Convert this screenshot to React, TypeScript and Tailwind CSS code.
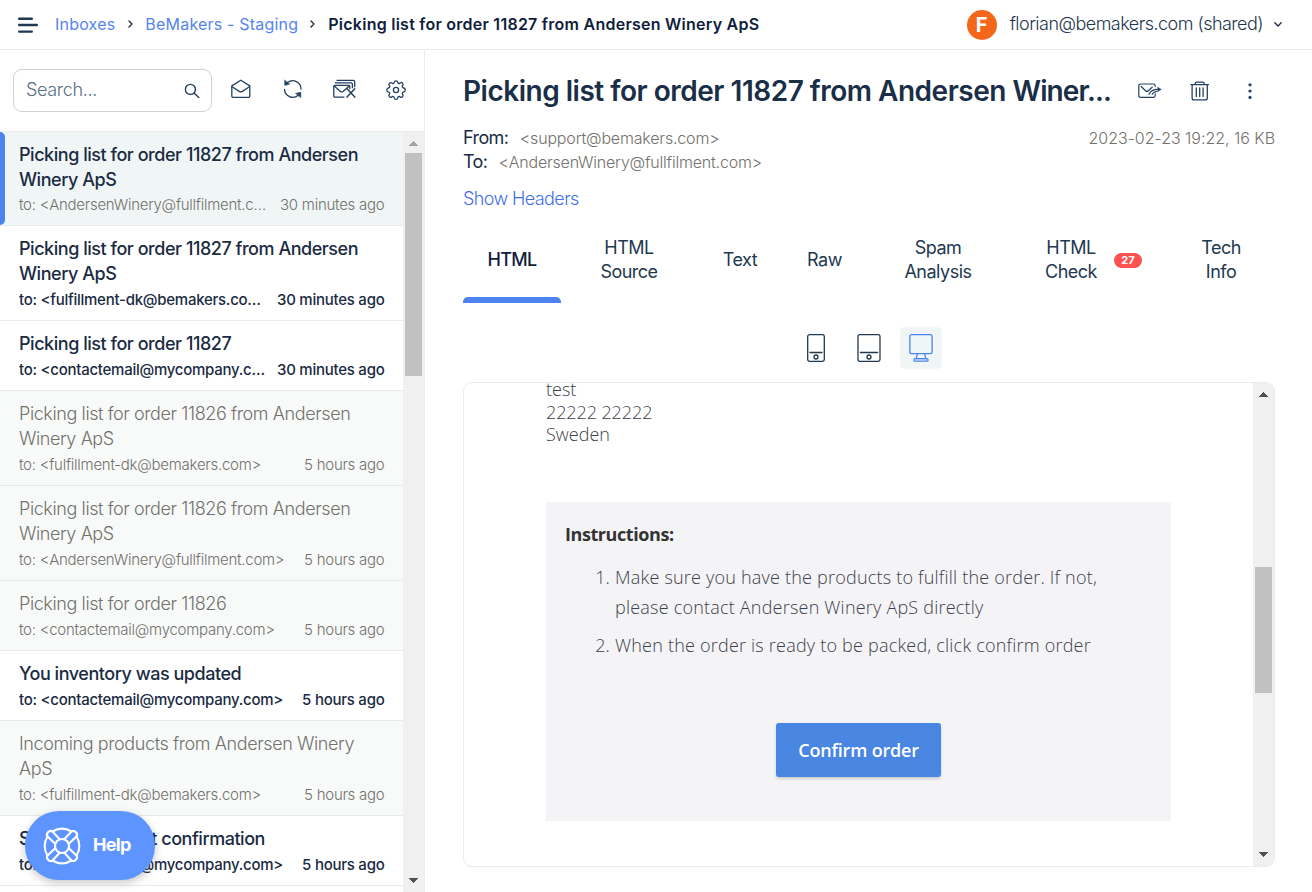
import React from "react";

type Mail = {
  title: string;
  to: string;
  time: string;
  state: "selected" | "unread" | "read";
};

const mails: Mail[] = [
  { title: "Picking list for order 11827 from Andersen Winery ApS", to: "<AndersenWinery@fullfilment.com>", time: "30 minutes ago", state: "selected" },
  { title: "Picking list for order 11827 from Andersen Winery ApS", to: "<fulfillment-dk@bemakers.com>", time: "30 minutes ago", state: "unread" },
  { title: "Picking list for order 11827", to: "<contactemail@mycompany.com>", time: "30 minutes ago", state: "unread" },
  { title: "Picking list for order 11826 from Andersen Winery ApS", to: "<fulfillment-dk@bemakers.com>", time: "5 hours ago", state: "read" },
  { title: "Picking list for order 11826 from Andersen Winery ApS", to: "<AndersenWinery@fullfilment.com>", time: "5 hours ago", state: "read" },
  { title: "Picking list for order 11826", to: "<contactemail@mycompany.com>", time: "5 hours ago", state: "read" },
  { title: "You inventory was updated", to: "<contactemail@mycompany.com>", time: "5 hours ago", state: "unread" },
  { title: "Incoming products from Andersen Winery ApS", to: "<fulfillment-dk@bemakers.com>", time: "5 hours ago", state: "read" },
  { title: "Stock movement confirmation", to: "<contactemail@mycompany.com>", time: "5 hours ago", state: "unread" },
];

const line = {
  fill: "none",
  stroke: "currentColor",
  strokeLinecap: "round" as const,
  strokeLinejoin: "round" as const,
};

const MenuIcon = () => (
  <svg className="h-4 w-5 text-[#1d3850]" viewBox="0 0 20 16" {...line} strokeWidth="2.4">
    <path d="M1.2 1.7h12.6M1.2 8h17.6M1.2 14.6h12.6" />
  </svg>
);

const SearchIcon = () => (
  <svg className="size-4" viewBox="0 0 16 16" {...line} strokeWidth="1.4">
    <circle cx="6.4" cy="6.4" r="5" />
    <path d="M10.2 10.2l4.6 4.4" />
  </svg>
);

const OpenMailIcon = () => (
  <svg className="size-5" viewBox="0 0 20 20" {...line} strokeWidth="1.3">
    <path d="M.8 6.900 9.800 1.200l9 5.700v10.200a1.200 1.200 0 0 1-1.200 1.200H2a1.200 1.200 0 0 1-1.200-1.200z" />
    <path d="m1.100 7.800 7.100 4.600a3 3 0 0 0 3.200 0l7-4.600" />
  </svg>
);

const RefreshIcon = () => (
  <svg className="size-5" viewBox="0 0 20 20" {...line} strokeWidth="1.300">
    <path d="M4.600 3.600A8.200 8.200 0 0 1 18 10.100M1.500 10.300A8.200 8.200 0 0 0 15.200 16.200" />
    <path d="M1.600 1.300 1.700 6.400 6.500 5.200zM17.700 18.600 18 13.300 12.800 14.300z" fill="currentColor" strokeWidth=".5" />
  </svg>
);

const MailsDeleteIcon = () => (
  <svg className="h-5 w-[23px]" viewBox="0 0 23 20" {...line} strokeWidth="1.300">
    <path d="M4 1.400h16.400a1.300 1.300 0 0 1 1.300 1.300v5" />
    <path d="M2.400 3.900h15.700a1.300 1.300 0 0 1 1.300 1.300v3.600" />
    <path d="M11 18.100H2a1.200 1.200 0 0 1-1.200-1.200V7.600A1.200 1.200 0 0 1 2 6.400h13.600a1.200 1.200 0 0 1 1.200 1.200v2" />
    <path d="m1.300 7 5.800 5.200a2.400 2.400 0 0 0 3.200 0L16.200 7" />
    <path d="m14 9.800 7.800 8.300M21.800 9.800 14 18.100" strokeWidth="1.500" />
  </svg>
);

const GearIcon = () => (
  <svg className="size-5" viewBox="0 0 20 20" {...line} strokeWidth="1.300">
    <path d="M8.300 1.900Q8.500.8 10 .8t1.700 1.100l.2.9q.3.600.9.700.6.100 1-.3l.7-.5q1-.6 2 .4t.4 2l-.5.800q-.3.500-.1 1 .2.700.8.900l.9.200q1.200.3 1.200 2t-1.200 1.900l-.9.200q-.6.200-.8.800-.2.500.1 1l.5.800q.6 1-.4 2t-2 .4l-.8-.5q-.4-.3-1-.1-.6.100-.8.800l-.2.900q-.3 1.100-1.700 1.100t-1.700-1.100l-.2-.9q-.2-.6-.8-.8-.6-.2-1 .1l-.8.500q-1 .6-2-.4t-.4-2l.5-.8q.3-.5.1-1-.2-.6-.8-.8L2 11.900Q.8 11.600.8 10T2 8l.9-.2q.6-.2.8-.8.2-.5-.1-1l-.5-.8q-.6-1 .4-2t2-.4l.8.500q.4.400 1 .2.600-.1.8-.8z" />
    <circle cx="10" cy="10" r="2.600" />
  </svg>
);

const ForwardMailIcon = () => (
  <svg className="h-4 w-6" viewBox="0 0 24 16" {...line} strokeWidth="1.200">
    <path d="M17.200 3.400V2.800A1.800 1.800 0 0 0 15.400 1H2.500A1.700 1.700 0 0 0 .8 2.700v10a1.700 1.700 0 0 0 1.700 1.700h12.900a1.800 1.800 0 0 0 1.800-1.800v-1.700" />
    <path d="m3.200 3.500 4.300 4.200a2 2 0 0 0 2.800 0l3.900-3.500" />
    <path d="M11 11.100c1.600-3 3.900-4.600 8.400-4.700M14.200 11.200c1-1.600 2.400-2.500 4.600-2.800" />
    <path d="m19.900 4.200 3.400 2.200-3.400 2.200z" fill="currentColor" strokeWidth=".4" />
  </svg>
);

const TrashIcon = () => (
  <svg className="size-5" viewBox="0 0 20 20" {...line} strokeWidth="1.300">
    <path d="M.9 3.600h17.600M5.200 3.400V2.500A1.400 1.400 0 0 1 6.600 1.100h6.200a1.400 1.400 0 0 1 1.400 1.400v.9" />
    <path d="M2.100 3.800v13.200a1.900 1.900 0 0 0 1.900 1.900h11.400a1.900 1.900 0 0 0 1.900-1.900V3.800M6.300 7v8.500M9.700 7v8.500M13.100 7v8.500" />
  </svg>
);

const PhoneIcon = () => (
  <svg className="h-7 w-[18px]" viewBox="0 0 18 28" {...line} strokeWidth="1.300">
    <rect x=".7" y=".7" width="16.600" height="26.600" rx="1.800" />
    <path d="M3 18.500h12" />
    <circle cx="9" cy="23" r="2" />
  </svg>
);

const TabletIcon = () => (
  <svg className="h-7 w-6" viewBox="0 0 24 28" {...line} strokeWidth="1.300">
    <rect x="1" y=".7" width="22" height="26.600" rx="1.800" />
    <path d="M3.400 18.500h17.200" />
    <circle cx="12" cy="23" r="2" />
  </svg>
);

const DesktopIcon = () => (
  <svg className="h-7 w-6" viewBox="0 0 24 28" {...line} strokeWidth="1.300">
    <rect x=".9" y=".7" width="22.200" height="19" rx="1.800" />
    <path d="M8.300 19.800c-.2 2.200-.6 3.800-1.500 4.900h10.400c-.9-1.100-1.300-2.700-1.500-4.900" />
    <rect x="4.900" y="24.700" width="14.200" height="2.500" rx="1.200" />
  </svg>
);

const LifebuoyIcon = () => (
  <svg className="size-[38px]" viewBox="0 0 38 38" {...line} strokeWidth="2.100">
    <circle cx="19" cy="19" r="7" />
    <path d="M9.500 4.500a17.300 17.300 0 0 1 19 0M33.500 9.500a17.300 17.300 0 0 1 0 19M28.500 33.500a17.300 17.300 0 0 1-19 0M4.500 28.500a17.300 17.300 0 0 1 0-19" />
    <path d="m9.500 4.500 7.200 7.700M4.500 9.500l7.700 7.200M28.500 4.500l-7.200 7.700M33.500 9.500l-7.700 7.200M28.500 33.500l-7.200-7.700M33.500 28.500l-7.700-7.200M9.500 33.500l7.200-7.700M4.500 28.500l7.700-7.200" />
    <path d="M9.500 4.500c-2.700-2-7.200 2-5 5M28.500 4.500c2.700-2 7.200 2 5 5M33.500 28.500c2 2.700-2 7.200-5 5M4.500 28.500c-2 2.700 2 7.200 5 5" />
  </svg>
);

const Chevron = ({ className }: { className: string }) => (
  <svg className={className} viewBox="0 0 5 8" {...line} strokeWidth="1.400">
    <path d="m1 1 3 3-3 3" />
  </svg>
);

const Arrow = ({ className }: { className: string }) => (
  <svg className={className} viewBox="0 0 9 5" shapeRendering="crispEdges">
    <path d="M4.500 0 9 5H0z" fill="currentColor" />
  </svg>
);

function MailRow({ mail }: { mail: Mail }) {
  const { state } = mail;
  const row = state === "selected" ? "bg-[#f0f6f6]" : state === "read" ? "bg-[#f8faf9]" : "bg-white";
  const title =
    state === "read"
      ? "font-light tracking-[-0.4px] text-[#72716c]"
      : "font-medium tracking-[-0.46px] text-[#1a2b42]";
  const sub =
    state === "unread"
      ? "font-medium tracking-[-0.26px] text-[#1a2b42]"
      : "font-light tracking-[-0.26px] text-[#72716c]";
  return (
    <div className={`relative border-b border-[#e9ebeb] pt-2.5 pr-[18.5px] pb-[7px] pl-[19px] ${row}`}>
      {state === "selected" && <span className="absolute inset-y-0 left-0 w-[5px] rounded-r-[5px] bg-[#4c83ee]" />}
      <div className={`w-[350px] text-[18px] leading-[25px] ${title}`}>{mail.title}</div>
      <div className={`flex justify-between text-[15px] ${state === "selected" ? "leading-[26px]" : "leading-[27px]"} ${sub}`}>
        <span className="max-w-[250px] truncate data-[wide=true]:max-w-[270px]" data-wide={mail.time === "5 hours ago"}>
          to: {mail.to}
        </span>
        <span className="shrink-0 tracking-[-0.25px]">{mail.time}</span>
      </div>
    </div>
  );
}

export default function App() {
  return (
    <div className="relative flex h-[892px] w-[1312px] flex-col overflow-hidden bg-white font-['Inter',sans-serif] text-[#1a2b42]">
      <header className="flex h-[50px] shrink-0 items-center border-b border-[#ebebeb] pr-[30px] pl-[18px]">
        <MenuIcon />
        <nav className="mb-0.5 ml-[17px] flex items-center text-[16px] leading-6">
          <span className="tracking-[0.2px] text-[#5684ee]">Inboxes</span>
          <Chevron className="mx-[12.5px] h-2 w-[5px]" />
          <span className="tracking-[0.2px] text-[#5684ee]">BeMakers - Staging</span>
          <Chevron className="mr-[13px] ml-[12px] h-2 w-[5px]" />
          <span className="font-semibold tracking-[0.25px] text-[#101d3c]">
            Picking list for order 11827 from Andersen Winery ApS
          </span>
        </nav>
        <div className="ml-auto flex items-center">
          <span className="flex size-[30px] items-center justify-center rounded-full bg-[#f4671b] text-[20px] font-bold text-white">
            F
          </span>
          <span className="mb-0.5 ml-[13px] text-[18px] leading-6 font-light tracking-[-0.52px] text-[#1f3650]">
            florian@bemakers.com (shared)
          </span>
          <svg className="ml-[11px] h-[5px] w-2" viewBox="0 0 8 5" {...line} strokeWidth="1.300">
            <path d="m.8.8 3.200 3.200L7.200.8" />
          </svg>
        </div>
      </header>

      <div className="flex min-h-0 flex-1">
        <aside className="flex w-[425px] shrink-0 flex-col border-r border-[#ebebeb]">
          <div className="flex h-[81px] shrink-0 items-center pl-[13px] text-[#234060]">
            <div className="flex h-[43px] w-[199px] items-center justify-between rounded-[9px] border border-[#cfd2d8] pr-[11px] pl-3">
              <span className="mb-0.5 text-[18px] font-light tracking-[-0.34px] text-[#567082]">Search...</span>
              <SearchIcon />
            </div>
            <div className="mb-[3px] ml-[19px] flex items-center gap-[30px]">
              <OpenMailIcon />
              <span className="ml-0.5">
                <RefreshIcon />
              </span>
              <MailsDeleteIcon />
              <span className="mt-px">
                <GearIcon />
              </span>
            </div>
          </div>
          <div className="flex min-h-0 flex-1 overflow-hidden border-t border-[#e9ebeb]">
            <div className="w-[403px] shrink-0">
              {mails.map((m, i) => (
                <MailRow key={i} mail={m} />
              ))}
            </div>
            <div className="flex flex-1 flex-col items-center bg-[#f0f0f0]">
              <Arrow className="mt-[9px] h-[5px] w-[9px] shrink-0 text-[#a3a3a3]" />
              <div className="mt-[7px] h-[223px] w-[17px] shrink-0 bg-[#c1c1c1]" />
              <Arrow className="mt-auto mb-[9px] h-[5px] w-[9px] shrink-0 rotate-180 text-[#505050]" />
            </div>
          </div>
        </aside>

        <main className="flex flex-1 flex-col pr-[37px] pl-[38px]">
          <div className="mt-[21px] flex h-10 items-center">
            <h1 className="w-[655px] text-[28px] leading-10 font-semibold tracking-[-0.49px] whitespace-nowrap text-[#1a2f47]">
              Picking list for order 11827 from Andersen <span className="tracking-[-0.9px]">Winer...</span>
            </h1>
            <div className="ml-5 flex items-center text-[#234060]">
              <ForwardMailIcon />
              <span className="mb-px ml-[28px]">
                <TrashIcon />
              </span>
              <svg className="ml-[38px] h-4 w-1" viewBox="0 0 4 16" fill="currentColor">
                <circle cx="2" cy="1.800" r="1.600" />
                <circle cx="2" cy="8" r="1.600" />
                <circle cx="2" cy="14.400" r="1.600" />
              </svg>
            </div>
          </div>

          <div className="mt-[15px] flex justify-between leading-6">
            <div>
              <div className="flex items-baseline">
                <span className="text-[18px] tracking-[-0.6px]">From:</span>
                <span className="ml-[11.5px] text-[16px] font-light tracking-[-0.18px] text-[#72716c]">&lt;support@bemakers.com&gt;</span>
              </div>
              <div className="flex items-baseline">
                <span className="text-[18px] tracking-[-0.6px]">To:</span>
                <span className="ml-[11px] text-[16px] font-light tracking-[-0.2px] text-[#72716c]">
                  &lt;AndersenWinery@fullfilment.com&gt;
                </span>
              </div>
            </div>
            <span className="text-[16px] font-light tracking-[-0.03px] text-[#72716c]">2023-02-23 19:22, 16 KB</span>
          </div>
          <a className="mt-[13px] text-[18px] leading-6 font-light tracking-[-0.6px] text-[#3f70e8]">Show Headers</a>

          <div className="mt-[13px] grid h-[79px] grid-cols-[98px_136px_86px_83px_144px_167px_88px] text-center text-[18px] leading-6 tracking-[-0.5px] text-[#22384f]">
            <div className="relative flex items-center justify-center pb-[7px] font-medium tracking-[-0.75px] text-[#101d3c]">
              HTML
              <span className="absolute inset-x-0 bottom-0 h-1.5 rounded-t-[5px] bg-[#4c83ee]" />
            </div>
            <div className="flex items-center justify-center pb-[7px]">
              HTML
              <br />
              Source
            </div>
            <div className="flex items-center justify-center pb-[7px]">Text</div>
            <div className="flex items-center justify-center pb-[7px]">Raw</div>
            <div className="flex items-center justify-center pb-[7px]">
              <span className="w-20">Spam Analysis</span>
            </div>
            <div className="flex items-center justify-center pr-[2px] pb-[7px]">
              <span className="w-14">HTML Check</span>
              <span className="mt-px ml-[15px] h-[15px] w-7 rounded-full bg-[#fb5151] text-[11px] leading-[15px] font-bold tracking-normal text-white">
                27
              </span>
            </div>
            <div className="flex items-center justify-center pb-[7px]">
              <span className="w-10">Tech Info</span>
            </div>
          </div>

          <div className="mt-6 flex h-[42px] items-center justify-center gap-[10.5px] pr-px text-[#22384f]">
            <span className="flex size-[42px] items-center justify-center">
              <PhoneIcon />
            </span>
            <span className="flex size-[42px] items-center justify-center">
              <TabletIcon />
            </span>
            <span className="flex size-[42px] items-center justify-center rounded-[5px] bg-[#f0f6f6] text-[#4c83ee]">
              <DesktopIcon />
            </span>
          </div>

          <section className="mt-[13px] flex h-[485px] overflow-hidden rounded-[9px] border border-[#ebebeb] font-['Open_Sans','Noto_Sans',sans-serif] text-[#3d404b]">
            <div className="flex-1 pl-[82px]">
              <div className="-mt-[5px] text-[18px] leading-[22.500px] font-light">
                <div>test</div>
                <div className="tracking-[-0.1px]">22222 22222</div>
                <div>Sweden</div>
              </div>
              <div className="mt-[56.500px] h-[319px] w-[625px] bg-[#f4f4f7] px-[19px] pt-[17px]">
                <div className="text-[18px] leading-[30px] font-bold tracking-[-0.42px] text-[#333333]">Instructions:</div>
                <ol className="mt-[13px] list-decimal space-y-2 pl-[50px] text-[18px] leading-[30px] font-light tracking-[0.21px]">
                  <li>
                    Make sure you have the products to fulfill the order. If not,
                    <br />
                    please contact Andersen Winery ApS directly
                  </li>
                  <li>When the order is ready to be packed, click confirm order</li>
                </ol>
                <div className="mt-[63px] flex justify-center">
                  <button className="h-[54px] w-[165px] rounded-[3px] bg-[#4886e2] text-[18px] font-semibold tracking-[-0.2px] text-white shadow-[0_2px_3px_rgba(0,0,0,0.16)]">
                    Confirm order
                  </button>
                </div>
              </div>
            </div>
            <div className="flex w-[21px] shrink-0 flex-col items-center bg-[#f0f0f0]">
              <Arrow className="mt-[9px] h-[5px] w-[9px] shrink-0 text-[#505050]" />
              <div className="mt-[170px] h-[126px] w-[17px] shrink-0 bg-[#c1c1c1]" />
              <Arrow className="mt-auto mb-[9px] h-[5px] w-[9px] shrink-0 rotate-180 text-[#505050]" />
            </div>
          </section>
        </main>
      </div>

      <button className="absolute top-[811px] left-[25px] flex h-[69px] w-[130px] items-center rounded-[34px] bg-[#5d94ff] pl-[18px] text-white shadow-[0_3px_8px_rgba(0,0,0,0.22)]">
        <LifebuoyIcon />
        <span className="mb-0.5 ml-3 text-[18px] font-bold tracking-[-0.7px]">Help</span>
      </button>
    </div>
  );
}
